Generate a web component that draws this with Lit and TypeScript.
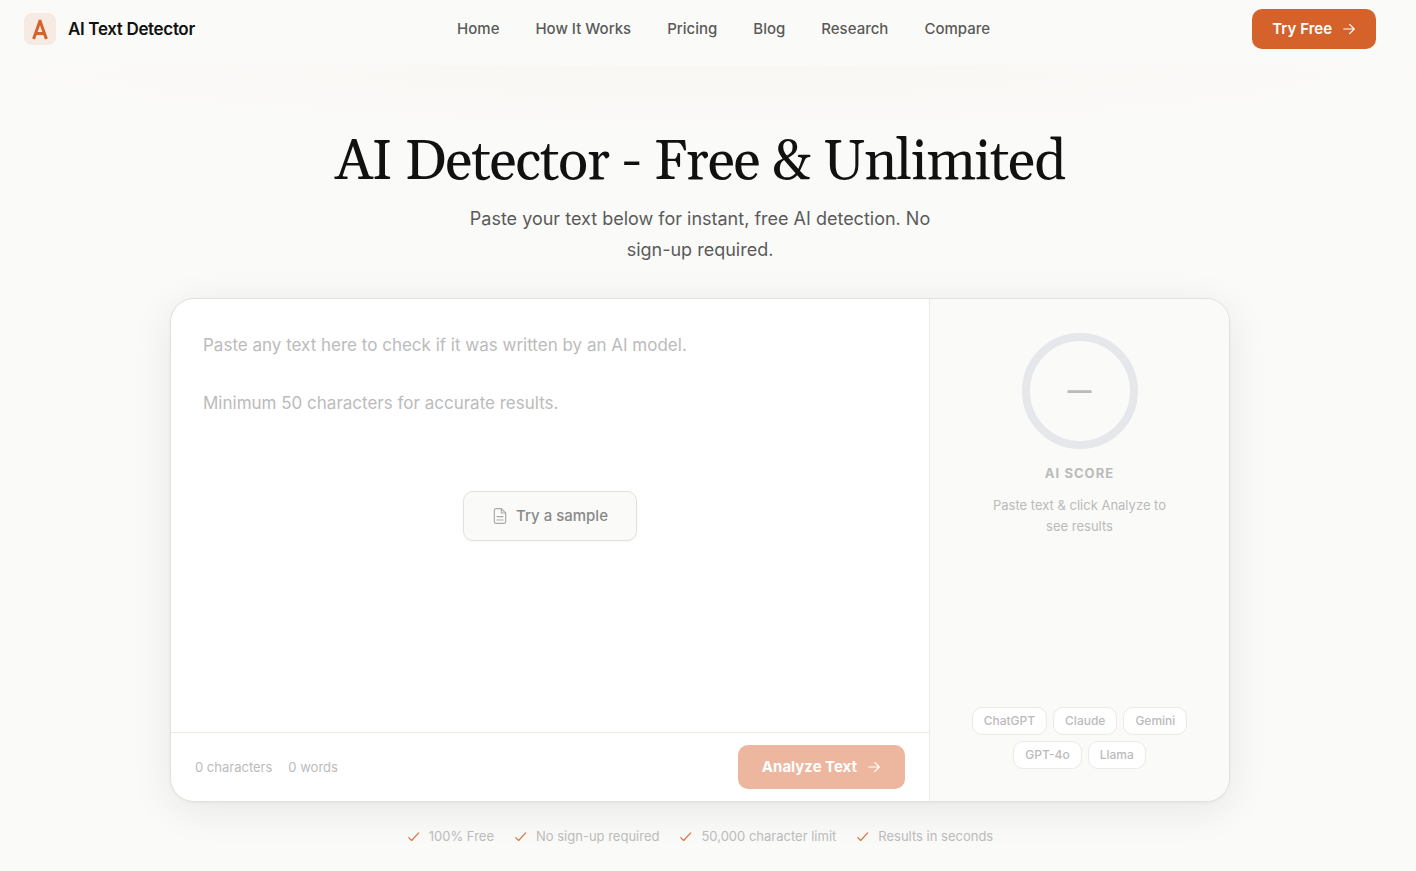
import { LitElement, html, css, svg } from "lit";
import { customElement, state } from "lit/decorators.js";

const NAV = ["Home", "How It Works", "Pricing", "Blog", "Research", "Compare"];
const MODELS = ["ChatGPT", "Claude", "Gemini", "GPT-4o", "Llama"];
const PERKS = ["100% Free", "No sign-up required", "50,000 character limit", "Results in seconds"];
const PLACEHOLDER =
  "Paste any text here to check if it was written by an AI model.\n\nMinimum 50 characters for accurate results.";
const SAMPLE =
  "Artificial intelligence has transformed the way people write, research and communicate in every industry.";

const icon = (size: number, width: number, body: unknown) => html`<svg
  width=${size} height=${size} viewBox="0 0 24 24" fill="none" stroke="currentColor"
  stroke-width=${width} stroke-linecap="round" stroke-linejoin="round" aria-hidden="true">${body}</svg>`;

const arrow = svg`<path d="M3 12h18M13 4l8 8-8 8"/>`;
const check = svg`<path d="M3 13l5 5L20 5"/>`;
const doc = svg`<path d="M14 1H6a2.500 2.500 0 0 0-2.500 2.500v17A2.500 2.500 0 0 0 6 23h12a2.500 2.500 0 0 0 2.500-2.500V7.500z"/><path d="M14 1v6.500h6.500M7.500 13h9M7.500 18h9"/>`;

@customElement("app-root")
export class AppRoot extends LitElement {
  @state() private text = "";

  static styles = css`
    :host {
      display: block;
      min-height: 100vh;
      box-sizing: border-box;
      padding-right: 16px;
      background: #fafaf8 radial-gradient(ellipse 60% 76px at 50% 65px, rgba(212, 98, 42, 0.02), transparent) no-repeat;
      color: #111;
      font-family: Inter, "Liberation Sans", sans-serif;
    }
    * { box-sizing: border-box; }
    svg { display: block; flex: none; }
    a { color: inherit; text-decoration: none; }
    button { font: inherit; cursor: pointer; }
    .header {
      display: flex;
      align-items: center;
      justify-content: space-between;
      padding: 9px 24px 16px;
      margin-right: -16px;
      padding-right: 40px;
      background: #fafaf8;
      line-height: 18px;
    }
    .brand { display: flex; align-items: center; gap: 12px; font-size: 17px; font-weight: 600; letter-spacing: -0.02em; }
    .links { display: flex; gap: 36px; font-size: 15px; font-weight: 500; color: #5a5a5a; }
    .cta {
      display: flex;
      align-items: center;
      gap: 10px;
      height: 40px;
      padding: 0 20px;
      border: 0;
      border-radius: 10px;
      background: #d4622a;
      color: #fff;
      font-size: 15px;
      line-height: 18px;
      font-weight: 600;
    }
    .hero { padding: 64px 24px 24px; text-align: center; }
    h1 {
      margin: 0;
      font-family: Georgia, Gelasio, "Liberation Serif", serif;
      font-size: 56px;
      line-height: 68px;
      font-weight: 400;
      letter-spacing: -0.02em;
    }
    .lead { max-width: 480px; margin: 6px auto 33px; font-size: 18px; line-height: 31px; color: #5a5a5a; }
    .card {
      display: grid;
      grid-template-columns: minmax(0, 1fr) 300px;
      max-width: 1060px;
      margin: 0 auto;
      overflow: hidden;
      border: 1px solid #e2e2da;
      border-radius: 24px;
      background: #fff;
      text-align: left;
      box-shadow: 0 8px 40px rgba(0, 0, 0, 0.08), 0 1px 3px rgba(0, 0, 0, 0.04);
    }
    .editor { display: flex; flex-direction: column; }
    .entry { display: grid; }
    .entry > * { grid-area: 1 / 1; }
    textarea {
      width: 100%;
      min-height: 433px;
      padding: 32px;
      border: 0;
      outline: 0;
      resize: none;
      background: transparent;
      color: #111;
      font: 400 17px/29px Inter, "Liberation Sans", sans-serif;
    }
    textarea::placeholder { color: #bbb; opacity: 1; }
    .sample {
      place-self: center;
      display: flex;
      align-items: center;
      gap: 8px;
      height: 50px;
      padding: 0 28px;
      border: 1px solid #e2e2da;
      border-radius: 10px;
      background: #fafaf8;
      color: #888;
      font-size: 15px;
      font-weight: 500;
      box-shadow: 0 1px 3px rgba(0, 0, 0, 0.04);
    }
    .sample svg { color: #aaa; }
    .bar {
      display: flex;
      align-items: center;
      justify-content: space-between;
      padding: 12px 24px;
      border-top: 1px solid #ebebe4;
    }
    .counts { display: flex; gap: 16px; font-size: 13px; line-height: 18px; color: #bbb; }
    .analyze { height: 44px; padding: 0 24px; font-weight: 700; }
    .analyze:disabled { background: #ecb69f; cursor: default; }
    .panel {
      display: flex;
      flex-direction: column;
      align-items: center;
      padding: 32px 24px;
      border-left: 1px solid #ebebe4;
      background: #fafaf8;
      text-align: center;
      color: #bbb;
    }
    .gauge { display: grid; place-items: center; }
    .gauge > * { grid-area: 1 / 1; }
    .score { font-size: 24px; line-height: 32px; font-weight: 700; }
    .label { margin: 12px 0 11px; font-size: 13px; line-height: 21px; font-weight: 700; letter-spacing: 0.08em; }
    .hint { max-width: 180px; margin: 0 0 auto; font-size: 13px; line-height: 21px; }
    .models {
      display: flex;
      flex-wrap: wrap;
      justify-content: center;
      gap: 6px;
      margin: 0;
      padding: 0;
      list-style: none;
      font-size: 12px;
      line-height: 26px;
      font-weight: 500;
    }
    .models li { padding: 0 11px; border: 1px solid #ebebe4; border-radius: 10px; background: #fff; }
    .perks {
      display: flex;
      flex-wrap: wrap;
      justify-content: center;
      gap: 20px;
      margin: 24px 0 0;
      padding: 0;
      list-style: none;
      font-size: 13px;
      line-height: 21px;
      color: #bbb;
    }
    .perks li { display: flex; align-items: center; gap: 8px; }
    .perks svg { color: #e0703a; }
  `;

  render() {
    const words = this.text.trim() ? this.text.trim().split(/\s+/).length : 0;
    return html`
      <header class="header">
        <a class="brand" href="#">
          <svg width="32" height="32" viewBox="0 0 32 32" aria-hidden="true">
            <rect width="32" height="32" rx="8" fill="#f6eae2" />
            <path d="M16.300 7L9.600 26M15.700 7l6.700 19M12 20.500h8" fill="none" stroke="#d4622a" stroke-width="3" />
          </svg>
          <span>AI Text Detector</span>
        </a>
        <nav class="links">${NAV.map((n) => html`<a href="#">${n}</a>`)}</nav>
        <a class="cta" href="#">Try Free ${icon(14, 2, arrow)}</a>
      </header>
      <main class="hero">
        <h1>AI Detector - Free &amp; Unlimited</h1>
        <p class="lead">Paste your text below for instant, free AI detection. No sign-up required.</p>
        <section class="card">
          <div class="editor">
            <div class="entry">
              <textarea
                aria-label="Text to analyze"
                placeholder=${PLACEHOLDER}
                .value=${this.text}
                @input=${(e: Event) => (this.text = (e.target as HTMLTextAreaElement).value)}
              ></textarea>
              ${this.text
                ? ""
                : html`<button class="sample" type="button" @click=${() => (this.text = SAMPLE)}>
                    ${icon(16, 1.8, doc)}<span>Try a sample</span>
                  </button>`}
            </div>
            <div class="bar">
              <div class="counts"><span>${this.text.length} characters</span><span>${words} words</span></div>
              <button class="cta analyze" type="button" ?disabled=${this.text.length < 50}>
                Analyze Text ${icon(14, 2, arrow)}
              </button>
            </div>
          </div>
          <aside class="panel">
            <div class="gauge">
              <svg width="120" height="120" viewBox="0 0 120 120" aria-hidden="true">
                <circle cx="60" cy="60" r="54" fill="none" stroke="#e5e7eb" stroke-width="8" />
              </svg>
              <span class="score">—</span>
            </div>
            <div class="label">AI SCORE</div>
            <p class="hint">Paste text &amp; click Analyze to see results</p>
            <ul class="models">${MODELS.map((m) => html`<li>${m}</li>`)}</ul>
          </aside>
        </section>
        <ul class="perks">${PERKS.map((p) => html`<li>${icon(14, 2, check)}<span>${p}</span></li>`)}</ul>
      </main>
    `;
  }
}
